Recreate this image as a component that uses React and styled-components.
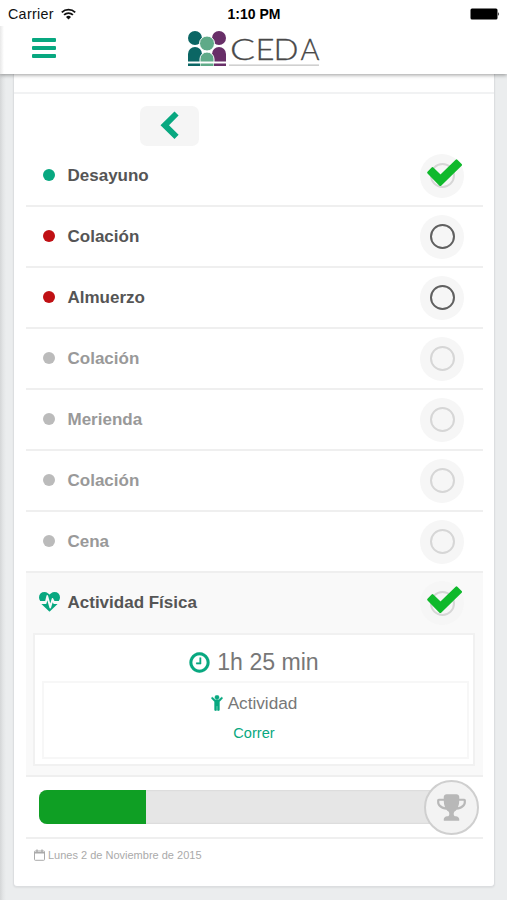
import React from "react";
import styled, { createGlobalStyle } from "styled-components";

const GlobalStyle = createGlobalStyle`
  * {
    box-sizing: border-box;
  }
  body {
    margin: 0;
    background: #ebedee;
    font-family: "Liberation Sans", Arial, sans-serif;
    color: #555;
  }
`;

const Screen = styled.div`
  display: flex;
  flex-direction: column;
  width: 507px;
  height: 900px;
  overflow: hidden;
  background: linear-gradient(to right, #d4d6d7, #e3e5e6 3px, #ebedee 6px);
`;

const Top = styled.div`
  position: relative;
  z-index: 1;
  height: 74px;
  flex: none;
  background: #fff;
  box-shadow: 0 1px 4px rgba(0, 0, 0, 0.4);
`;

const StatusBar = styled.div`
  display: grid;
  grid-template-columns: 1fr auto 1fr;
  align-items: center;
  height: 26px;
  padding: 1px 7px 0 8px;
  font-size: 14.3px;
  color: #111;
`;

const Carrier = styled.div`
  display: flex;
  align-items: center;
  gap: 7px;
  letter-spacing: 0.3px;
`;

const Time = styled.div`
  font-weight: bold;
  font-size: 14px;
  color: #000;
`;

const Battery = styled.svg`
  justify-self: end;
`;

const NavBar = styled.div`
  display: flex;
  align-items: flex-start;
  height: 48px;
  padding: 4px 0 0 32px;
  background: linear-gradient(to right, #e8e8e8, #fff 4px);
`;

const MenuButton = styled.div`
  display: flex;
  flex-direction: column;
  gap: 4px;
  width: 24px;
  margin-top: 8px;
`;

const MenuLine = styled.span`
  height: 4px;
  border-radius: 1px;
  background: #08a880;
`;

const Logo = styled.svg`
  margin-left: 131px;
`;

const Card = styled.div`
  width: 482px;
  height: 813px;
  margin-left: 13px;
  border: 1px solid #dcdee0;
  border-top: none;
  border-radius: 0 0 4px 4px;
  background: #fff;
  box-shadow: 0 1px 2px rgba(0, 0, 0, 0.06);
`;

const CardTop = styled.div`
  height: 20px;
  border-bottom: 2px solid #f1f2f3;
`;

const Content = styled.div`
  padding: 12px 11px 0 12px;
`;

const BackButton = styled.div`
  display: flex;
  justify-content: center;
  align-items: center;
  width: 59px;
  height: 40px;
  margin-left: 114px;
  padding-bottom: 2px;
  border-radius: 7px;
  background: #f5f5f5;
`;

const Row = styled.div`
  display: flex;
  align-items: center;
  height: ${(props) => (props.$last ? "60px" : "61.05px")};
  padding: 0 19px 0 12px;
  border-bottom: ${(props) => (props.$last ? "none" : "2px solid #efefef")};
  color: ${(props) => (props.$muted ? "#999" : "#555")};
`;

const Marker = styled.div`
  display: flex;
  justify-content: center;
  width: 22px;
  margin: 0 7.5px 2px 0;
  color: #08a880;
`;

const Dot = styled.span`
  width: 12px;
  height: 12px;
  border-radius: 50%;
  background: ${(props) => props.$color};
`;

const Label = styled.div`
  flex: 1;
  font-size: 17px;
  font-weight: bold;
`;

const Toggle = styled.div`
  position: relative;
  display: flex;
  justify-content: center;
  align-items: center;
  width: 44px;
  height: 44px;
  border-radius: 50%;
  background: #f6f6f6;
`;

const Ring = styled.span`
  width: 25px;
  height: 25px;
  border: 2px solid ${(props) => (props.$active ? "#606060" : "#d6d6d6")};
  border-radius: 50%;
`;

const CheckIcon = styled.svg`
  position: absolute;
  top: 5px;
  left: 7px;
`;

const Activity = styled.div`
  height: 204px;
  border-bottom: 2px solid #efefef;
  background: #f9f9f9;
`;

const ActivityBox = styled.div`
  width: 442px;
  height: 133px;
  margin: 0 auto 0 7px;
  padding: 14px 4px 0 7px;
  border: 2px solid #f1f1f1;
  background: #fff;
`;

const Duration = styled.div`
  display: flex;
  justify-content: center;
  align-items: center;
  gap: 7px;
  height: 27px;
  margin-right: 3px;
  font-size: 23.1px;
  color: #777;
`;

const Detail = styled.div`
  display: flex;
  flex-direction: column;
  align-items: center;
  height: 78px;
  margin-top: 5px;
  padding: 10px 3px 0 0;
  border: 2px solid #f7f7f7;
`;

const DetailTitle = styled.div`
  display: flex;
  align-items: center;
  gap: 5px;
  height: 20px;
  font-size: 17.2px;
  color: #777;
`;

const DetailValue = styled.div`
  margin-top: 11px;
  font-size: 14.6px;
  line-height: 18px;
  color: #08a880;
`;

const Progress = styled.div`
  display: flex;
  align-items: center;
  height: 62px;
  padding: 0 3px 0 13px;
  border-bottom: 2px solid #efefef;
`;

const Track = styled.div`
  width: 400px;
  height: 34px;
  border-radius: 8px;
  overflow: hidden;
  background: #e6e6e6;
  box-shadow: inset 0 0 2px rgba(0, 0, 0, 0.15);
`;

const Fill = styled.div`
  width: 107px;
  height: 100%;
  background: #0f9f24;
`;

const Trophy = styled.div`
  display: flex;
  justify-content: center;
  align-items: center;
  flex: none;
  width: 55px;
  height: 55px;
  margin-left: -15px;
  border: 2px solid #cfcfcf;
  border-radius: 50%;
  background: #f3f3f3;
  color: #b8b8b8;
  z-index: 1;
`;

const DateLine = styled.div`
  display: flex;
  align-items: center;
  gap: 3px;
  padding: 10px 0 0 8px;
  font-size: 11px;
  color: #aaa;
`;

const IconSlot = styled.span`
  display: flex;
  color: #08a880;
`;

const paths = {
  clock:
    "M1024 544v448q0 14-9 23t-23 9h-320q-14 0-23-9t-9-23v-64q0-14 9-23t23-9h224v-352q0-14 9-23t23-9h64q14 0 23 9t9 23zm416 352q0-148-73-273t-198-198-273-73-273 73-198 198-73 273 73 273 198 198 273 73 273-73 198-198 73-273zm224 0q0 209-103 385.500t-279.500 279.500-385.500 103-385.500-103-279.500-279.500-103-385.500 103-385.500 279.500-279.500 385.500-103 385.500 103 279.500 279.500 103 385.500z",
  trophy:
    "M522 883q-74-162-74-371h-256v96q0 78 94.500 162t235.500 113zm1078-275v-96h-256q0 209-74 371 141-29 235.500-113t94.500-162zm128-128v128q0 71-41.500 143t-112 130-173 97.500-215.500 44.500q-42 54-95 95-38 34-52.500 72.500t-14.500 89.500q0 54 30.500 91t97.500 37q75 0 133.500 45.500t58.500 114.500v64q0 14-9 23t-23 9h-832q-14 0-23-9t-9-23v-64q0-69 58.500-114.500t133.500-45.500q67 0 97.500-37t30.500-91q0-51-14.500-89.500t-52.500-72.500q-53-41-95-95-113-5-215.500-44.500t-173-97.500-112-130-41.500-143v-128q0-40 28-68t68-28h288v-96q0-66 47-113t113-47h576q66 0 113 47t47 113v96h288q40 0 68 28t28 68z",
  heart:
    "M1280 1024h305q-5 6-10 10.500t-9 7.500l-3 4-623 600q-18 18-44 18t-44-18l-624-602q-5-2-21-20h369q22 0 39.500-13.500t22.500-34.500l70-281 190 667q6 20 23 33t39 13q21 0 38-13t23-33l146-485 56 112q18 35 57 35zm512-556q0 145-103 300h-369l-111-221q-8-17-25.500-27t-36.500-8q-45 5-56 46l-129 430-196-686q-6-20-23.500-33t-39.500-13-39 13.500-22 34.500l-116 464h-423q-103-155-103-300 0-220 127-344t351-124q62 0 126.500 21.500t120 58 95.500 68.500 76 68q36-36 76-68t95.500-68.500 120-58 126.500-21.500q224 0 351 124t127 344z",
  child:
    "M1380 476l-292 292v832q0 46-33 79t-79 33-79-33-33-79v-384h-64v384q0 46-33 79t-79 33-79-33-33-79v-832l-292-292q-28-28-28-68t28-68q29-28 68.500-28t67.500 28l228 228h368l228-228q28-28 68-28t68 28q28 29 28 68.500t-28 67.500zM1056 320a224 224 0 1 1-448 0a224 224 0 1 1 448 0z",
};

const Icon = ({ name, width, height = width, box = "0 0 1792 1792", stroke = 0 }) => (
  <svg width={width} height={height} viewBox={box} fill="currentColor" stroke="currentColor" strokeWidth={stroke}>
    <path d={paths[name]} />
  </svg>
);

const meals = [
  { name: "Desayuno", color: "#08a880", done: true },
  { name: "Colación", color: "#c01014", active: true },
  { name: "Almuerzo", color: "#c01014", active: true },
  { name: "Colación", color: "#bbb", muted: true },
  { name: "Merienda", color: "#bbb", muted: true },
  { name: "Colación", color: "#bbb", muted: true },
  { name: "Cena", color: "#bbb", muted: true },
];

const Status = ({ active, done }) => (
  <Toggle>
    <Ring $active={active} />
    {done && (
      <CheckIcon width="35" height="28" viewBox="0 0 35 28" fill="#10b92c" stroke="#10b92c" strokeWidth="2.4" strokeLinejoin="round">
        <path d="M1.400 13.600L5.500 9.300L13.500 17L29.500 1.600L33.800 5.800L13.300 25.800z" />
      </CheckIcon>
    )}
  </Toggle>
);

function CedaLogo() {
  return (
    <Logo width="134" height="38" viewBox="0 0 134 38">
      <g fill="#0b6664">
        <circle cx="8" cy="8" r="7" />
        <path d="M1 31.500V24a7 7 0 0 1 14 0v7.500z" />
        <rect x="1" y="33.5" width="12" height="2.5" />
      </g>
      <g fill="#682f68">
        <circle cx="32" cy="8" r="7" />
        <path d="M25 31.500V24a7 7 0 0 1 14 0v7.500z" />
        <rect x="27" y="33.5" width="12" height="2.5" />
      </g>
      <g fill="#5faa88" stroke="#fff" strokeWidth="1">
        <circle cx="20" cy="13.5" r="7.5" />
        <path d="M13 32V29a7 7 0 0 1 14 0v3z" />
      </g>
      <rect x="13.500" y="33.500" width="13" height="2.500" fill="#5faa88" />
      <text
        y="30"
        fontFamily="Lato, sans-serif"
        fontWeight="300"
        fontSize="28.500"
        fill="#484848"
        stroke="#484848"
        strokeWidth="0.3"
      >
        <tspan x="43" textLength="25" lengthAdjust="spacingAndGlyphs">C</tspan>
        <tspan x="68.500" textLength="19" lengthAdjust="spacingAndGlyphs">E</tspan>
        <tspan x="86.500" textLength="25" lengthAdjust="spacingAndGlyphs">D</tspan>
        <tspan x="113.500" textLength="19" lengthAdjust="spacingAndGlyphs">A</tspan>
      </text>
      <rect x="42" y="34.500" width="90" height="1.300" fill="#c5c5c5" />
    </Logo>
  );
}

function App() {
  return (
    <>
      <GlobalStyle />
      <Screen>
        <Top>
          <StatusBar>
            <Carrier>
              Carrier
              <svg width="15" height="12" viewBox="0 0 15 12" fill="none" stroke="#111" strokeWidth="1.800">
                <path d="M0.800 4.400a9.600 9.600 0 0 1 13.400 0M3.100 6.900a6.300 6.300 0 0 1 8.800 0" />
                <path d="M7.500 11.500L5 9a3.500 3.500 0 0 1 5 0z" fill="#111" stroke="none" />
              </svg>
            </Carrier>
            <Time>1:10 PM</Time>
            <Battery width="30" height="12" viewBox="0 0 30 12">
              <rect x="0.500" y="0.500" width="27" height="11" rx="1.500" />
              <path d="M28.200 4q1.800 2 0 4z" />
            </Battery>
          </StatusBar>
          <NavBar>
            <MenuButton>
              <MenuLine />
              <MenuLine />
              <MenuLine />
            </MenuButton>
            <CedaLogo />
          </NavBar>
        </Top>
        <Card>
          <CardTop />
          <Content>
            <BackButton>
              <svg width="19" height="29" viewBox="0 0 19 29" fill="#08a880">
                <path d="M0.500 14.300L14.500 0.500L18.600 4.600L9 14.300L18.600 23.800L14.500 28z" />
              </svg>
            </BackButton>
            {meals.map((meal, index) => (
              <Row key={index} $muted={meal.muted}>
                <Marker>
                  <Dot $color={meal.color} />
                </Marker>
                <Label>{meal.name}</Label>
                <Status active={meal.active} done={meal.done} />
              </Row>
            ))}
            <Activity>
              <Row $last>
                <Marker>
                  <Icon name="heart" width={21} />
                </Marker>
                <Label>Actividad Física</Label>
                <Status done />
              </Row>
              <ActivityBox>
                <Duration>
                  <IconSlot>
                    <Icon name="clock" width={21} box="100 100 1592 1592" stroke={10} />
                  </IconSlot>
                  1h 25 min
                </Duration>
                <Detail>
                  <DetailTitle>
                    <IconSlot>
                      <Icon name="child" width={12} height={16} box="216 76 1232 1656" stroke={40} />
                    </IconSlot>
                    Actividad
                  </DetailTitle>
                  <DetailValue>Correr</DetailValue>
                </Detail>
              </ActivityBox>
            </Activity>
            <Progress>
              <Track>
                <Fill />
              </Track>
              <Trophy>
                <Icon name="trophy" width={31} />
              </Trophy>
            </Progress>
            <DateLine>
              <svg width="11" height="12" viewBox="0 0 11 12" fill="none" stroke="#aaa">
                <rect x="0.500" y="2" width="10" height="9.300" rx="0.800" />
                <path d="M0.500 3.800h10M3 0.500v2.500M8 0.500v2.500" strokeWidth="1.400" />
              </svg>
              Lunes 2 de Noviembre de 2015
            </DateLine>
          </Content>
        </Card>
      </Screen>
    </>
  );
}

export default App;
